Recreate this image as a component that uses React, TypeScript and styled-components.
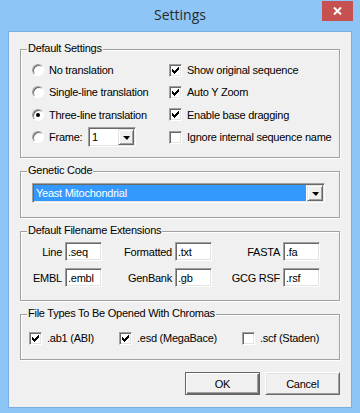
import React from 'react';
import styled, { createGlobalStyle } from 'styled-components';

const GlobalStyle = createGlobalStyle`
  html, body {
    margin: 0;
    padding: 0;
  }
  body {
    width: 360px;
    height: 413px;
    overflow: hidden;
  }
`;

const Window = styled.div`
    width: 360px;
    height: 413px;
    box-sizing: border-box;
    background: #8cc5f6;
    display: flex;
    flex-direction: column;
    font-family: "Liberation Sans", Arial, sans-serif;
    font-size: 11px;
    letter-spacing: -0.25px;
    color: #000;
`;

const TitleBar = styled.div`
    height: 31px;
    flex-shrink: 0;
    display: grid;
    grid-template-columns: 1fr auto 1fr;
    align-items: start;
`;

const Title = styled.div`
    grid-column: 2;
    font-family: "Open Sans", "Noto Sans", sans-serif;
    font-size: 14px;
    letter-spacing: 0;
    line-height: 30px;
    color: #2b2b2b;
`;

const CloseButton = styled.div`
    grid-column: 3;
    justify-self: end;
    margin: 1px 7px 0 0;
    width: 31px;
    height: 20px;
    background: #c75050;
    display: flex;
    align-items: center;
    justify-content: center;
`;

const Client = styled.div`
    flex: 1;
    margin: 0 8px 5px;
    background: #f0f0f0;
    border: 1px solid #78aee2;
    padding: 17px 11px 0;
    display: flex;
    flex-direction: column;
    gap: 13px;
`;

const GroupBox = styled.div<{ $h: number }>`
    position: relative;
    height: ${(p) => p.$h}px;
    box-sizing: border-box;
    border: 1px solid #a0a0a0;
    box-shadow: inset 1px 1px 0 #fff, 1px 1px 0 #fff;
    flex-shrink: 0;
`;

const Legend = styled.span`
    position: absolute;
    left: 6px;
    top: -8px;
    padding: 0 1px;
    line-height: 13px;
    background: #f0f0f0;
    white-space: nowrap;
`;

const SettingsGrid = styled.div`
    display: grid;
    grid-template-columns: 137px 1fr;
    grid-auto-rows: 22.3px;
    align-items: center;
    padding: 9px 0 0 11px;
`;

const Option = styled.div<{ $w?: number }>`
    display: flex;
    align-items: center;
    gap: 5px;
    white-space: nowrap;
    ${(p) => (p.$w ? `width: ${p.$w}px;` : '')}
`;

const Radio = styled.span<{ $on?: boolean }>`
    width: 12px;
    height: 12px;
    box-sizing: border-box;
    border-radius: 50%;
    border: 1px solid;
    border-color: #a0a0a0 #fff #fff #a0a0a0;
    box-shadow: inset 1px 1px 0 #696969;
    background: #fff;
    display: flex;
    align-items: center;
    justify-content: center;
    flex-shrink: 0;

    &::after {
        content: '';
        width: 4px;
        height: 4px;
        border-radius: 50%;
        background: ${(p) => (p.$on ? '#000' : 'transparent')};
    }
`;

const Box = styled.span`
    width: 13px;
    height: 13px;
    box-sizing: border-box;
    border: 1px solid;
    border-color: #a0a0a0 #fff #fff #a0a0a0;
    box-shadow: inset 1px 1px 0 #696969, inset -1px -1px 0 #e3e3e3;
    background: #fff;
    display: flex;
    align-items: center;
    justify-content: center;
    flex-shrink: 0;
`;

const FrameLabel = styled.span`
    width: 34px;
`;

const Combo = styled.div<{ $w: number }>`
    width: ${(p) => p.$w}px;
    height: 20px;
    box-sizing: border-box;
    border: 1px solid;
    border-color: #a0a0a0 #fff #fff #a0a0a0;
    box-shadow: inset 1px 1px 0 #696969, inset -1px -1px 0 #e3e3e3;
    background: #fff;
    padding: 1px;
    display: flex;
`;

const ComboText = styled.div<{ $selected?: boolean }>`
    flex: 1;
    line-height: 16px;
    padding-left: 2px;
    margin-right: 1px;
    background: ${(p) => (p.$selected ? '#3399ff' : 'transparent')};
    color: ${(p) => (p.$selected ? '#fff' : '#000')};
    white-space: nowrap;
`;

const DropButton = styled.div`
    width: 16px;
    height: 16px;
    box-sizing: border-box;
    background: #f0f0f0;
    border: 1px solid;
    border-color: #e3e3e3 #696969 #696969 #e3e3e3;
    box-shadow: inset 1px 1px 0 #fff, inset -1px -1px 0 #a0a0a0;
    display: flex;
    align-items: center;
    justify-content: center;

    &::after {
        content: '';
        border-left: 4px solid transparent;
        border-right: 3px solid transparent;
        border-top: 4px solid #000;
        margin-top: 1px;
    }
`;

const CodeRow = styled.div`
    padding: 11px 0 0 11px;
`;

const ExtGrid = styled.div`
    display: grid;
    grid-template-columns: 44px 37px 73px 37px 71px 37px;
    grid-auto-rows: 19px;
    row-gap: 7px;
    align-items: center;
    padding-top: 10px;
`;

const ExtLabel = styled.span`
    text-align: right;
    padding-right: 3px;
    white-space: nowrap;
`;

const Field = styled.input`
    width: 37px;
    height: 19px;
    box-sizing: border-box;
    margin: 0;
    padding: 0 2px;
    border: 1px solid;
    border-color: #a0a0a0 #fff #fff #a0a0a0;
    box-shadow: inset 1px 1px 0 #696969, inset -1px -1px 0 #e3e3e3;
    background: #fff;
    font: inherit;
    letter-spacing: inherit;
    color: #000;
    outline: none;
`;

const ChromaRow = styled.div`
    display: flex;
    align-items: center;
    height: 26px;
    padding: 10px 0 0 8px;
`;

const ButtonRow = styled.div`
    display: flex;
    justify-content: flex-end;
    gap: 5px;
    margin-top: -1px;
`;

const Button = styled.button<{ $default?: boolean }>`
    width: 75px;
    height: 23px;
    box-sizing: border-box;
    margin: 0;
    padding: 0;
    font: inherit;
    letter-spacing: inherit;
    color: #000;
    background: #f0f0f0;
    border: 1px solid;
    border-color: ${(p) => (p.$default ? '#646464' : '#fff #696969 #696969 #fff')};
    box-shadow: ${(p) =>
      p.$default
        ? 'inset 1px 1px 0 #fff, inset -1px -1px 0 #696969, inset -2px -2px 0 #a0a0a0'
        : 'inset 1px 1px 0 #e3e3e3, inset -1px -1px 0 #a0a0a0'};
`;

const Check = () => (
  <svg width="7" height="7" viewBox="0 0 7 7" shapeRendering="crispEdges">
    <path d="M6 0h1v3h-1v1h-1v1h-1v1h-1v1h-1v-1h-1v-1h-1v-3h1v1h1v1h1v-1h1v-1h1z" fill="#000" />
  </svg>
);

const CheckOption = ({ label, checked, w }: { label: string; checked?: boolean; w?: number }) => (
  <Option $w={w}>
    <Box>{checked && <Check />}</Box>
    <span>{label}</span>
  </Option>
);

const RadioOption = ({ label, on }: { label: string; on?: boolean }) => (
  <Option>
    <Radio $on={on} />
    <span>{label}</span>
  </Option>
);

const extensions = [
  ['Line', '.seq', 'Formatted', '.txt', 'FASTA', '.fa'],
  ['EMBL', '.embl', 'GenBank', '.gb', 'GCG RSF', '.rsf'],
];

export default function App() {
  return (
    <>
      <GlobalStyle />
      <Window>
        <TitleBar>
          <Title>Settings</Title>
          <CloseButton>
            <svg width="9" height="8" viewBox="0 0 9 8">
              <path d="M1 0.5 L8 7.5 M8 0.5 L1 7.5" stroke="#fff" strokeWidth="2" />
            </svg>
          </CloseButton>
        </TitleBar>
        <Client>
          <GroupBox $h={109}>
            <Legend>Default Settings</Legend>
            <SettingsGrid>
              <RadioOption label="No translation" />
              <CheckOption label="Show original sequence" checked />
              <RadioOption label="Single-line translation" />
              <CheckOption label="Auto Y Zoom" checked />
              <RadioOption label="Three-line translation" on />
              <CheckOption label="Enable base dragging" checked />
              <Option>
                <Radio />
                <FrameLabel>Frame:</FrameLabel>
                <Combo $w={48}>
                  <ComboText>1</ComboText>
                  <DropButton />
                </Combo>
              </Option>
              <CheckOption label="Ignore internal sequence name" />
            </SettingsGrid>
          </GroupBox>

          <GroupBox $h={47}>
            <Legend>Genetic Code</Legend>
            <CodeRow>
              <Combo $w={293}>
                <ComboText $selected>Yeast Mitochondrial</ComboText>
                <DropButton />
              </Combo>
            </CodeRow>
          </GroupBox>

          <GroupBox $h={70}>
            <Legend>Default Filename Extensions</Legend>
            <ExtGrid>
              {extensions.map((row) =>
                [0, 2, 4].map((i) => (
                  <React.Fragment key={row[i]}>
                    <ExtLabel>{row[i]}</ExtLabel>
                    <Field readOnly defaultValue={row[i + 1]} />
                  </React.Fragment>
                ))
              )}
            </ExtGrid>
          </GroupBox>

          <GroupBox $h={46}>
            <Legend>File Types To Be Opened With Chromas</Legend>
            <ChromaRow>
              <CheckOption label=".ab1 (ABI)" checked w={90} />
              <CheckOption label=".esd (MegaBace)" checked w={123} />
              <CheckOption label=".scf (Staden)" />
            </ChromaRow>
          </GroupBox>

          <ButtonRow>
            <Button $default>OK</Button>
            <Button>Cancel</Button>
          </ButtonRow>
        </Client>
      </Window>
    </>
  );
}
